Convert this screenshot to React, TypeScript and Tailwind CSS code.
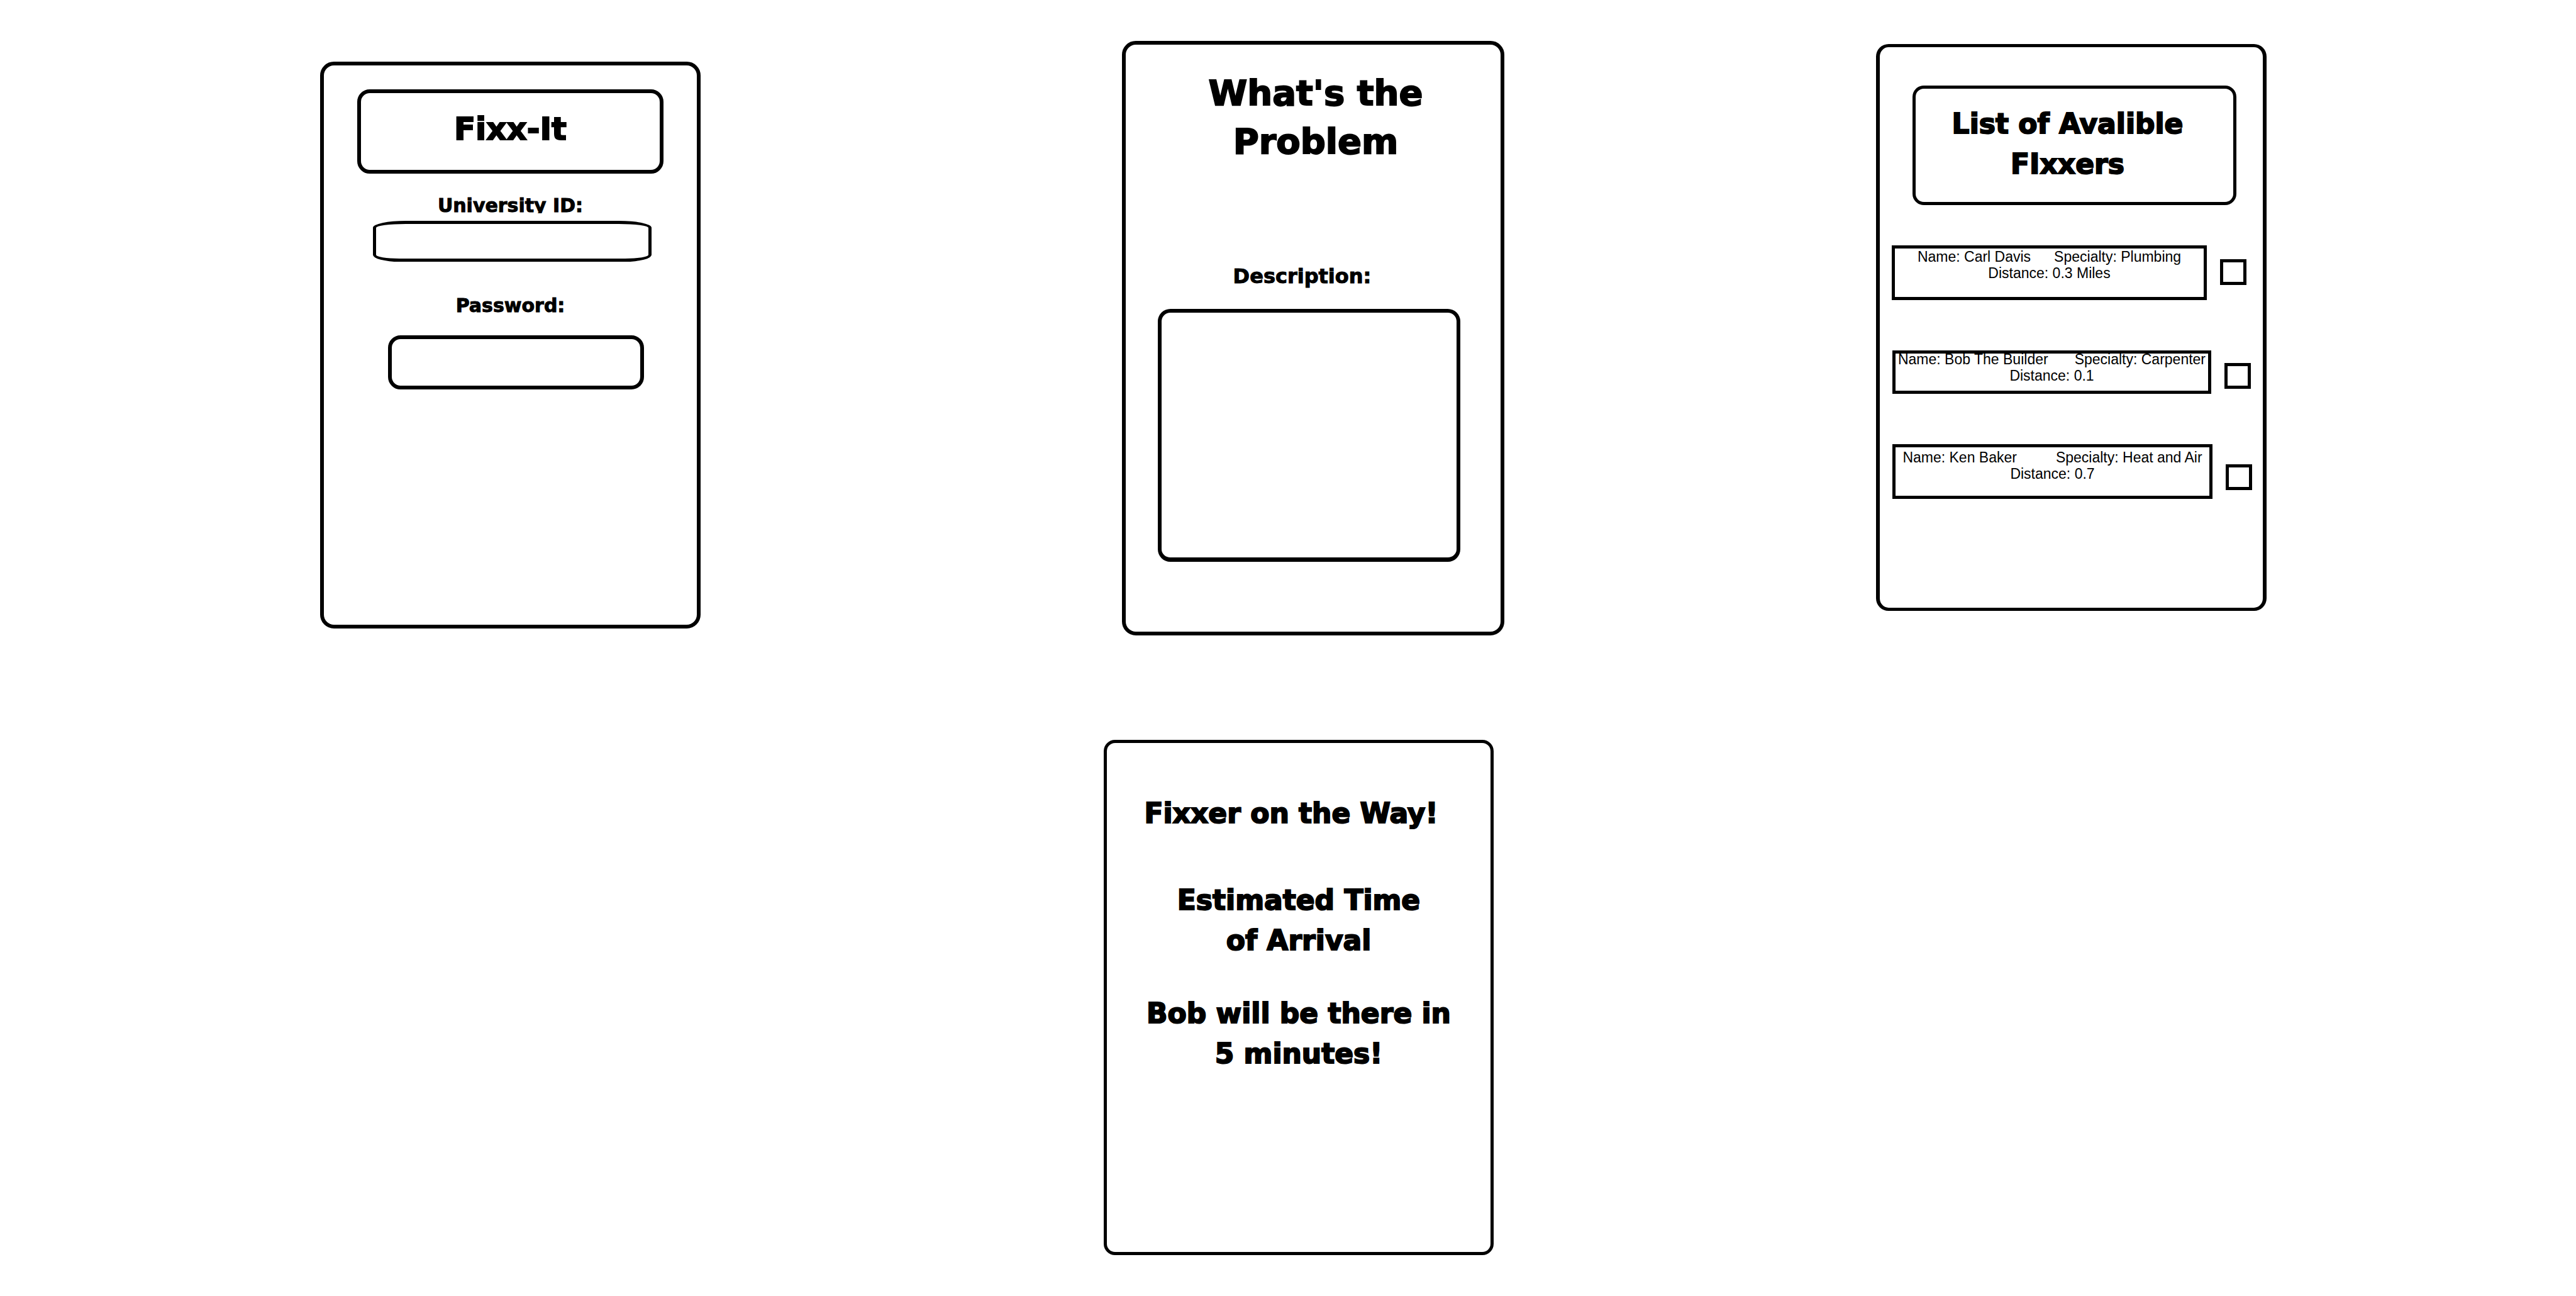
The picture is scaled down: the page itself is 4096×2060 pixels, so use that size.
import type { ReactNode } from "react";

type Fixxer = {
  id: string;
  name: string;
  specialty: string;
  distance: string;
  row: string;
  box: string;
  text: string;
  tick: string;
};

const fixxers: Fixxer[] = [
  {
    id: "carl",
    name: "Carl Davis",
    specialty: "Plumbing",
    distance: "0.3 Miles",
    row: "pl-[19px] pr-[26px]",
    box: "pb-[25px]",
    text: "gap-x-[37px]",
    tick: "mt-[22px]",
  },
  {
    id: "bob",
    name: "Bob The Builder",
    specialty: "Carpenter",
    distance: "0.1",
    row: "pl-[20px] pr-[19px]",
    box: "pb-[11px]",
    text: "-mt-1 gap-x-[42px]",
    tick: "mt-[20px]",
  },
  {
    id: "ken",
    name: "Ken Baker",
    specialty: "Heat and Air",
    distance: "0.7",
    row: "pl-[20px] pr-[17px]",
    box: "pt-[3px] pb-[22px]",
    text: "gap-x-[62px]",
    tick: "mt-[32px]",
  },
];

function Screen({ className, children }: { className: string; children: ReactNode }) {
  return (
    <section className={`flex min-w-0 flex-col border-black bg-white text-black ${className}`}>
      {children}
    </section>
  );
}

function LoginScreen() {
  return (
    <Screen className="col-start-2 mt-[98px] min-h-[901px] rounded-[22px] border-6 pt-[38px]">
      <h1 className="mx-[53px] rounded-[20px] border-6 pt-[25px] pb-[33px] text-center text-[50px] leading-[64px] [-webkit-text-stroke:2px_black]">
        Fixx-It
      </h1>
      <label
        htmlFor="university-id"
        className="mt-[33px] h-[30px] overflow-hidden text-center text-[30px] leading-[36px] [-webkit-text-stroke:1px_black]"
      >
        University ID:
      </label>
      <input
        id="university-id"
        type="text"
        className="mt-3 mr-[72px] ml-[78px] h-[65px] min-w-0 rounded-t-[52px_11px] rounded-b-[42px_11px] border-[5px] border-black px-6 text-[30px] outline-none"
      />
      <label
        htmlFor="password"
        className="mt-[52px] text-center text-[30px] leading-[36px] [-webkit-text-stroke:1px_black]"
      >
        Password:
      </label>
      <input
        id="password"
        type="password"
        className="mt-[29px] mr-[84px] ml-[102px] h-[86px] min-w-0 rounded-[20px] border-6 border-black px-6 text-[30px] outline-none"
      />
    </Screen>
  );
}

function ProblemScreen() {
  return (
    <Screen className="col-start-4 mt-[65px] min-h-[945px] rounded-[22px] border-6 pt-[38px]">
      <h2 className="pl-2 text-center text-[56px] leading-[77px] [-webkit-text-stroke:2px_black]">
        What&apos;s the
        <br />
        Problem
      </h2>
      <div className="mt-[158px] flex flex-col pr-[64px] pl-[51px]">
        <label
          htmlFor="description"
          className="pr-[22px] text-center text-[32px] leading-[36px] [-webkit-text-stroke:1px_black]"
        >
          Description:
        </label>
        <textarea
          id="description"
          className="mt-[34px] h-[402px] min-w-0 resize-none rounded-[20px] border-6 border-b-[7px] border-black p-6 text-[30px] outline-none"
        />
      </div>
    </Screen>
  );
}

function FixxerRow({ fixxer }: { fixxer: Fixxer }) {
  return (
    <li className={`flex items-start gap-[21px] ${fixxer.row}`}>
      <label
        htmlFor={fixxer.id}
        className={`min-w-0 flex-1 border-[5px] border-black font-['Liberation_Sans',Arial,sans-serif] text-[23px] leading-[26px] font-normal ${fixxer.box}`}
      >
        <span className={`flex justify-center whitespace-nowrap ${fixxer.text}`}>
          <span>Name: {fixxer.name}</span>
          <span>Specialty: {fixxer.specialty}</span>
        </span>
        <span className="block text-center">Distance: {fixxer.distance}</span>
      </label>
      <input
        id={fixxer.id}
        type="checkbox"
        className={`h-[41px] w-[42px] shrink-0 appearance-none border-[5px] border-black checked:bg-black ${fixxer.tick}`}
      />
    </li>
  );
}

function ListScreen() {
  return (
    <Screen className="col-start-6 mt-[70px] min-h-[901px] rounded-[20px] border-x-6 border-y-[5px] pt-[61px]">
      <h2 className="mr-[42px] ml-[52px] rounded-[18px] border-[5px] pt-[24px] pr-[22px] pb-[28px] text-center text-[44px] leading-[64px] [-webkit-text-stroke:2px_black]">
        List of Avalible
        <br />
        FIxxers
      </h2>
      <ul className="mt-[64px] flex flex-col gap-20">
        {fixxers.map((fixxer) => (
          <FixxerRow key={fixxer.id} fixxer={fixxer} />
        ))}
      </ul>
    </Screen>
  );
}

function ArrivalScreen() {
  return (
    <Screen className="col-start-2 min-h-[819px] rounded-[18px] border-[5px] pt-20 text-center text-[44px] leading-[64px] [-webkit-text-stroke:2px_black]">
      <h2 className="pr-6">Fixxer on the Way!</h2>
      <p className="mt-[74px]">
        Estimated Time
        <br />
        of Arrival
      </p>
      <p className="mt-[52px]">
        Bob will be there in
        <br />5 minutes!
      </p>
    </Screen>
  );
}

export default function App() {
  return (
    <main className="flex min-h-screen flex-col bg-white font-['DejaVu_Sans',Verdana,sans-serif] font-bold">
      <div className="grid grid-cols-[509fr_605fr_670fr_608fr_591fr_621fr_492fr] items-start">
        <LoginScreen />
        <ProblemScreen />
        <ListScreen />
      </div>
      <div className="mt-[166px] grid grid-cols-[1755fr_620fr_1721fr] pb-16">
        <ArrivalScreen />
      </div>
    </main>
  );
}
